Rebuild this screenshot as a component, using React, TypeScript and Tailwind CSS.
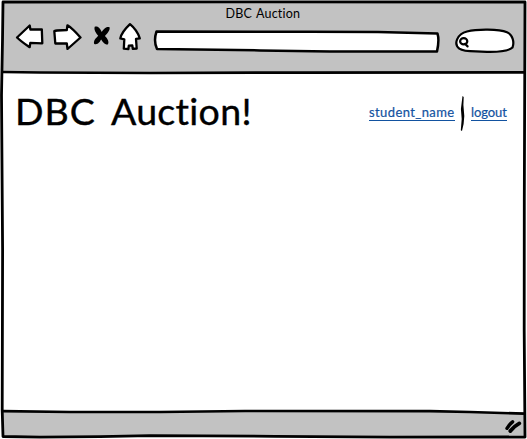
import React from "react";

const ink = { stroke: "#000", strokeWidth: 2.6, strokeLinejoin: "round", strokeLinecap: "round" } as const;

function BackIcon() {
  return (
    <svg className="h-[28px] w-[30px] shrink-0" viewBox="15 22 30 28">
      <path {...ink} strokeWidth={2.3} fill="#fff" d="M17 37.5L29.7 25.5L30.4 29.5L41.8 29.3L42.3 43.3L30.3 42.8L29.7 47.2C25 44 21 41.5 17 37.5Z" />
    </svg>
  );
}

function ForwardIcon() {
  return (
    <svg className="h-[28px] w-[31px] shrink-0" viewBox="52 22 31 28">
      <path {...ink} strokeWidth={2.3} fill="#fff" d="M54.3 31C57 30 61 30.4 66.8 30.2L67.4 25.3C72 28 76.5 33 80.5 37.5L67.5 49L66.8 43.5L55.3 43.5Z" />
    </svg>
  );
}

function StopIcon() {
  return (
    <svg className="h-[28px] w-[20px] shrink-0" viewBox="92 22 20 28">
      <path d="M94.7 26.8C98.2 25.6 100.2 28.8 101.8 32C103.4 29.4 105.8 26.2 109.6 27.2C110.2 30.5 107.3 33.3 104.9 36C107.6 38.6 109.5 42 107.8 44.6C104.3 44.8 102.7 41.7 101.1 39.6C99.6 42.1 98 45.1 94.2 44C93.2 40.8 95.8 38.3 98.2 35.8C96 33.2 93.7 30 94.7 26.8Z" />
    </svg>
  );
}

function HomeIcon() {
  return (
    <svg className="h-[30px] w-[24px] shrink-0" viewBox="118 22 24 30">
      <path {...ink} strokeWidth={2.3} fill="#fff" d="M130 24.2C134 27.5 138 33 139.8 38.3L136 38.8L136.7 48.5L132.8 48.9L132.3 45.5L128.8 45.6L128.4 49L123.8 48.7L124.3 39.3L120.3 38.4C121.3 33.8 126 28 130 24.2Z" />
    </svg>
  );
}

function AddressBar() {
  return (
    <svg className="h-[24px] w-[288px] shrink-0" viewBox="152 30 288 24">
      <path {...ink} strokeWidth={2.5} fill="#fff" d="M156.5 31.5L310 31.7L378 32L437.5 33.6Q439.5 40 437 51.5L330 51.4L260 50.4L157 49Q153.3 41 156.5 31.5Z" />
    </svg>
  );
}

function SearchBox() {
  return (
    <svg className="h-[26px] w-[62px] shrink-0" viewBox="454 28 62 26">
      <path {...ink} strokeWidth={2.2} fill="#fff" d="M467 31.5C477 29 499 29 507 32.2C512.5 34.5 514.6 42 512.5 47.5C508 51.7 497 52 487 51.8C476 50.7 465 52.8 459.3 48.7C453 43.5 457.5 34 467 31.5Z" />
      <ellipse cx="463.7" cy="41.2" rx="3.6" ry="3.1" fill="none" stroke="#000" strokeWidth="2.2" />
      <path {...ink} strokeWidth={2.2} d="M465 43.8L467.6 46.4" />
    </svg>
  );
}

function ResizeGrip() {
  return (
    <svg className="h-[16px] w-[18px]" viewBox="504 418 18 16" fill="none" stroke="#000" strokeLinecap="round">
      <path strokeWidth="3.4" d="M507 428.3Q509.5 424.2 512.6 421.8" />
      <path strokeWidth="3.8" d="M510.3 431Q514 426.3 519.3 423.4" />
    </svg>
  );
}

function Frame() {
  return (
    <svg className="pointer-events-none absolute inset-0 h-[439px] w-[527px]" viewBox="0 0 527 439" fill="none">
      <path stroke="#000" strokeWidth="2.8" strokeLinejoin="round" d="M3 2L260 1.8L525 2L524.8 60L524.3 200L524.2 330L525 437L390 437.2L275 436.3L150 435.7L100 436.7L40 437.2L3 436.5L2.2 410L2.6 250L1.5 95L2.5 40Z" />
      <path stroke="#000" strokeWidth="2.7" d="M3 72L40 72.5L150 73L300 72.6L524 72.3M3 411.2L70 412L160 412L245 411L430 411.2L470 412L524 413.7" />
    </svg>
  );
}

export default function App() {
  return (
    <div className="relative flex h-[439px] w-[527px] flex-col overflow-hidden bg-white font-['Lato','Liberation_Sans',sans-serif] text-black">
      <header className="mx-[3px] mt-[2px] flex h-[71px] shrink-0 flex-col bg-[#c2c2c2]">
        <h2 className="h-[20px] pl-[222.5px] pt-[2.5px] text-[12.5px] leading-[18px] tracking-[0.2px] [word-spacing:1px] whitespace-nowrap">DBC Auction</h2>
        <div className="flex pl-[12px]">
          <BackIcon />
          <div className="ml-[7px] flex"><ForwardIcon /></div>
          <div className="ml-[9px] flex"><StopIcon /></div>
          <div className="ml-[6px] flex"><HomeIcon /></div>
          <div className="ml-[10px] mt-[8px] flex"><AddressBar /></div>
          <div className="ml-[14px] mt-[6px] flex"><SearchBox /></div>
        </div>
      </header>
      <main className="flex h-[339px] shrink-0 justify-between pl-[15px] pr-[20px] pt-[15px]">
        <h1 className="text-[37.5px] leading-[46px] tracking-[1px] [word-spacing:4.5px] whitespace-nowrap [-webkit-text-stroke:0.4px_black]">DBC <span className="tracking-[0.3px]">Auction!</span></h1>
        <nav className="flex h-[48px] items-center text-[13px] leading-[18px] text-[#1252a0] [-webkit-text-stroke:0.2px_#1252a0]">
          <a href="#" className="mt-[2px] h-[16px] w-[86px] border-b border-[#1252a0] leading-[14px] tracking-[0.4px] whitespace-nowrap">student_name</a>
          <svg className="mt-[3px] ml-[4px] mr-[6px] h-[38px] w-[6px]" viewBox="459 95 6 38">
            <path d="M462.5 96L463.7 97L463.4 105L464.3 116L463.6 124L462 131L460.8 130.3L461.7 119L460.9 109Z" />
          </svg>
          <a href="#" className="mt-[2px] h-[16px] w-[36px] border-b border-[#1252a0] leading-[14px] tracking-[-0.1px] whitespace-nowrap">logout</a>
        </nav>
      </main>
      <footer className="mx-[3px] flex h-[25px] shrink-0 items-center justify-end bg-[#c2c2c2] pr-[2px] pt-[2px]">
        <ResizeGrip />
      </footer>
      <Frame />
    </div>
  );
}
